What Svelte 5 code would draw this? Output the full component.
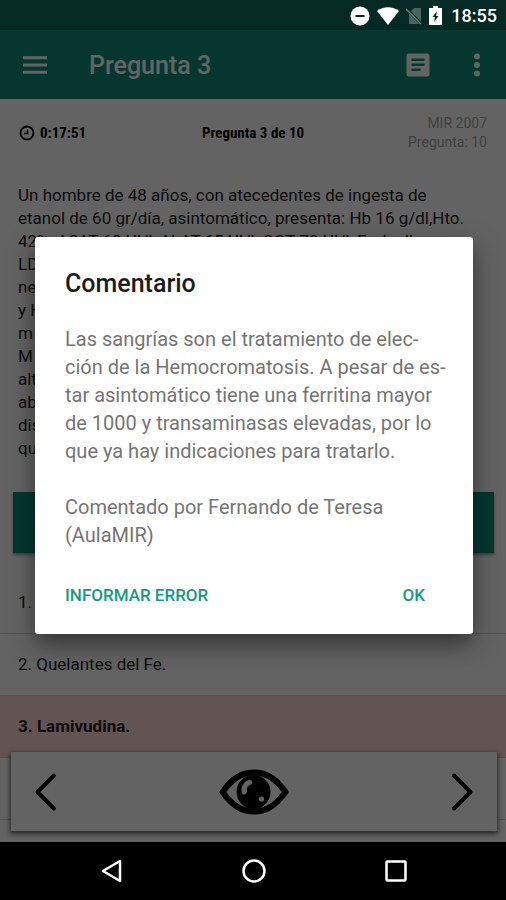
<script lang="ts">
  let showComment = $state(true);

  const options = [
    { id: 1, text: '', selected: false },
    { id: 2, text: 'Quelantes del Fe.', selected: false },
    { id: 3, text: 'Lamivudina.', selected: true },
    { id: 4, text: '', selected: false },
  ];

  const close = () => (showComment = false);
</script>

<div class="screen">
  <div class="app">
    <div class="status-space"></div>
    <header>
      <button class="icon" aria-label="Menú">
        <svg width="24" height="18" viewBox="0 0 24 18">
          <path d="M0 1.7h24M0 9h24M0 16.3h24" stroke="#fff" stroke-width="3" />
        </svg>
      </button>
      <h1>Pregunta 3</h1>
      <button class="icon" aria-label="Notas">
        <svg width="24" height="24" viewBox="0 0 24 24">
          <path
            fill="#fff"
            fill-rule="evenodd"
            d="M2.5 0.5h19a2 2 0 0 1 2 2v19a2 2 0 0 1-2 2h-19a2 2 0 0 1-2-2v-19a2 2 0 0 1 2-2zM5.5 5.5v2.5h13v-2.5zM5.5 10.5v2.5h13v-2.5zM5.5 15.5v2.5h9v-2.5z"
          />
        </svg>
      </button>
      <button class="icon" aria-label="Más opciones">
        <svg width="8" height="24" viewBox="0 0 8 24" fill="#fff">
          <circle cx="4" cy="3.5" r="3" />
          <circle cx="4" cy="12" r="3" />
          <circle cx="4" cy="20.5" r="3" />
        </svg>
      </button>
    </header>

    <main>
      <div class="info">
        <span class="timer">
          <svg width="16" height="16" viewBox="0 0 16 16" fill="none" stroke="#000">
            <circle cx="8" cy="8" r="6.5" stroke-width="1.8" />
            <path d="M8.5 4v4.5H5" stroke-width="1.4" />
          </svg>
          0:17:51
        </span>
        <span class="position">Pregunta 3 de 10</span>
        <span class="exam">MIR 2007<br />Pregunta: 10</span>
      </div>

      <p class="question">
        Un hombre de 48 años, con atecedentes de ingesta de<br />
        etanol de 60 gr/día, asintomático, presenta: Hb 16 g/dl,Hto.<br />
        42%, ASAT 60 UI/l, ALAT 65 UI/l, GGT 70 UI/l, F. alcalina<br />
        LD<br />
        ne<br />
        y H<br />
        m<br />
        M<br />
        alt<br />
        ab<br />
        dis<br />
        qu
      </p>

      <button class="comment" aria-label="Comentario" onclick={() => (showComment = true)}></button>

      <ol>
        {#each options as option}
          <li class:selected={option.selected}>{option.id}. {option.text}</li>
        {/each}
      </ol>
    </main>

    <nav class="pager">
      <button aria-label="Anterior">
        <svg width="24" height="40" viewBox="0 0 24 40">
          <path d="M20 3.5L3.5 20L20 36.5" />
        </svg>
      </button>
      <button aria-label="Ver respuesta">
        <svg class="eye" width="70" height="46" viewBox="0 0 70 46">
          <path
            d="M3.5 23C13 10 22 3.5 35 3.5s22 6.5 31.5 19.5C57 36 48 42.5 35 42.5S13 36 3.5 23z"
            fill="none"
            stroke="#000"
            stroke-width="6"
            stroke-linejoin="round"
          />
          <circle cx="34.5" cy="23" r="17" />
          <path
            fill="#fff"
            d="M31 11c3 0 3 4 0 5c-3 1-3 3-3 6c0 3-3 5-5 2c-2-5 2-13 8-13z"
          />
          <circle cx="42.5" cy="30" r="2.6" fill="#fff" />
        </svg>
      </button>
      <button aria-label="Siguiente">
        <svg width="24" height="40" viewBox="0 0 24 40">
          <path d="M4 3.5L20.5 20L4 36.5" />
        </svg>
      </button>
    </nav>
  </div>

  <div class="system-nav">
    <button aria-label="Atrás">
      <svg width="24" height="24" viewBox="0 0 24 24"><path d="M20 2v20L3 12z" /></svg>
    </button>
    <button aria-label="Inicio">
      <svg width="24" height="24" viewBox="0 0 24 24"><circle cx="12" cy="12" r="10.5" /></svg>
    </button>
    <button aria-label="Recientes">
      <svg width="24" height="24" viewBox="0 0 24 24">
        <rect x="2.5" y="2.5" width="19" height="19" rx="1" />
      </svg>
    </button>
  </div>

  {#if showComment}
    <div class="overlay">
      <div class="dialog" role="dialog" aria-modal="true" aria-labelledby="comment-title">
        <h2 id="comment-title">Comentario</h2>
        <p>
          Las sangrías son el tratamiento de elec-<br />
          ción de la Hemocromatosis. A pesar de es-<br />
          tar asintomático tiene una ferritina mayor<br />
          de 1000 y transaminasas elevadas, por lo<br />
          que ya hay indicaciones para tratarlo.
        </p>
        <p>
          Comentado por Fernando de Teresa<br />
          (AulaMIR)
        </p>
        <div class="actions">
          <button>INFORMAR ERROR</button>
          <button onclick={close}>OK</button>
        </div>
      </div>
    </div>
  {/if}

  <div class="status">
    <svg width="20" height="20" viewBox="0 0 20 20">
      <circle cx="10" cy="10" r="9.5" fill="#fff" />
      <path d="M5.5 10h9" stroke="#052a24" stroke-width="2" />
    </svg>
    <svg width="22" height="18" viewBox="0 0 22 18">
      <path d="M0 4C6-1 16-1 22 4L11 18z" fill="#fff" />
    </svg>
    <svg width="16" height="18" viewBox="0 0 16 18">
      <path d="M15 1v16H3V6l5-5z" fill="#4b655f" />
      <path d="M0 1l16 17" stroke="#052a24" stroke-width="3" />
      <path d="M0 2l15 15" stroke="#6d817d" stroke-width="1.5" />
    </svg>
    <svg width="13" height="19" viewBox="0 0 13 19">
      <path d="M4 0h5v2h4v17H0V2h4z" fill="#fff" />
      <path d="M8 5L3.5 11h2.5L5 16l4.5-6H7z" fill="#052a24" />
    </svg>
    <time>18:55</time>
  </div>
</div>

<style>
  :global(body) {
    margin: 0;
    background: #000;
  }
  .screen {
    position: relative;
    display: flex;
    flex-direction: column;
    height: 100vh;
    font-family: Roboto, sans-serif;
    color: #000;
  }
  button {
    padding: 0;
    border: none;
    background: none;
    font: inherit;
    color: inherit;
    cursor: pointer;
  }
  svg {
    display: block;
  }
  .app {
    position: relative;
    display: flex;
    flex-direction: column;
    flex: 1;
    min-height: 0;
    overflow: hidden;
    background: #fff;
  }
  .status-space {
    flex: none;
    height: 30px;
    background: #0d6b5a;
  }
  header {
    display: flex;
    flex: none;
    align-items: center;
    height: 69px;
    padding: 0 25px 0 23px;
    background: #108f7a;
    color: #fff;
  }
  header h1 {
    flex: 1;
    margin: 0 0 0 42px;
    padding-top: 2px;
    font-size: 25px;
    font-weight: 500;
    line-height: 32px;
  }
  header .icon + .icon {
    margin-left: 43px;
  }
  .info {
    display: grid;
    grid-template-columns: 1fr auto 1fr;
    align-items: center;
    height: 68px;
    padding: 0 19px;
    font-size: 14px;
  }
  .timer,
  .position {
    font-family: "Roboto Condensed", Roboto, sans-serif;
    font-size: 15px;
    font-weight: 700;
  }
  .timer {
    display: flex;
    align-items: center;
    gap: 5px;
  }
  .exam {
    line-height: 19px;
    text-align: right;
    color: #a8a8a8;
  }
  .question {
    margin: 17px 18px 32px;
    font-size: 17px;
    line-height: 23px;
    white-space: nowrap;
    color: #222;
  }
  .comment {
    display: block;
    width: calc(100% - 25px);
    height: 61px;
    margin: 0 12px 0 13px;
    background: #0c8e76;
    box-shadow: 0 2px 3px rgba(0, 0, 0, 0.4);
  }
  ol {
    margin: 19px 0 0;
    padding: 0;
    list-style: none;
    font-size: 17px;
  }
  li {
    height: 61px;
    padding-left: 18px;
    border-bottom: 1px solid #d8d8d8;
    line-height: 61px;
    color: #222;
  }
  li.selected {
    background: #ffd8d8;
    font-weight: 700;
  }
  .pager {
    position: absolute;
    right: 9px;
    bottom: 11px;
    left: 11px;
    display: flex;
    align-items: center;
    justify-content: space-between;
    height: 79px;
    padding: 0 23px;
    background: #fff;
    box-shadow: 0 2px 5px 1px rgba(0, 0, 0, 0.6);
    box-sizing: border-box;
  }
  .pager svg:not(.eye) {
    fill: none;
    stroke: #000;
    stroke-width: 4;
    stroke-linecap: round;
    stroke-linejoin: round;
  }
  .system-nav {
    display: flex;
    flex: none;
    align-items: center;
    justify-content: center;
    gap: 118px;
    height: 58px;
    padding-left: 2px;
    background: #000;
  }
  .system-nav svg {
    fill: none;
    stroke: #fff;
    stroke-width: 2.5;
    stroke-linejoin: round;
  }
  .overlay {
    position: absolute;
    inset: 0 0 58px;
    display: flex;
    align-items: center;
    justify-content: center;
    padding: 29px 33px 0 35px;
    background: rgba(0, 0, 0, 0.61);
  }
  .dialog {
    flex: 1;
    padding: 30px 24px 29px 30px;
    border-radius: 3px;
    background: #fff;
    box-shadow: 0 10px 24px rgba(0, 0, 0, 0.5);
  }
  .dialog h2 {
    margin: 0 0 24px;
    font-size: 25px;
    font-weight: 500;
    line-height: 34px;
    color: #1c1c1c;
  }
  .dialog p {
    margin: 0 0 28px;
    font-size: 20px;
    line-height: 28px;
    white-space: nowrap;
    color: #757575;
  }
  .actions {
    display: flex;
    justify-content: space-between;
    padding: 8px 24px 0 0;
  }
  .actions button {
    font-size: 17px;
    font-weight: 500;
    line-height: 20px;
    color: #159a83;
  }
  .status {
    position: absolute;
    top: 0;
    right: 9px;
    display: flex;
    align-items: center;
    gap: 7px;
    height: 31px;
    color: #fff;
  }
  .status time {
    margin-left: 2px;
    font-size: 18px;
    font-weight: 500;
  }
</style>
